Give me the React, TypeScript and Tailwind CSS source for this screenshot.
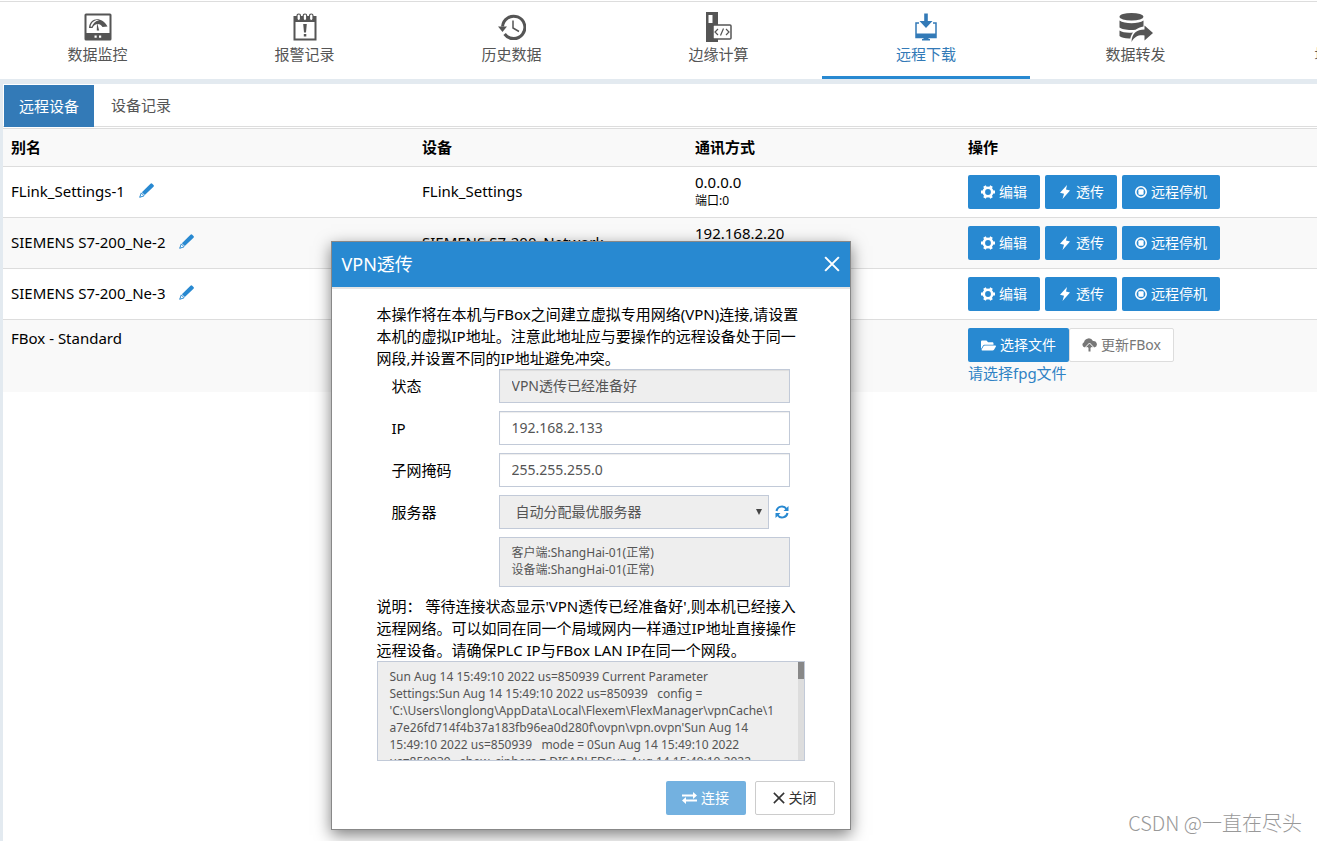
import type { ReactNode } from "react";
import { FaFolderOpen } from "react-icons/fa";

const BTN = "inline-flex h-[34px] items-center gap-1 rounded-xs text-sm";

interface NavItem {
  label: string;
  icon: ReactNode;
  active?: boolean;
  wide?: boolean;
}

function MonitorIcon() {
  return (
    <svg viewBox="0 0 28 28" className="h-7 w-7" fill="currentColor">
      <path fillRule="evenodd" d="M2 .5h24A1.500 1.500 0 0 1 27.500 2v24a1.500 1.500 0 0 1-1.500 1.500H2A1.500 1.500 0 0 1 .5 26V2A1.500 1.500 0 0 1 2 .5ZM2.500 2.500v17.500h23V2.500ZM10.500 22.500v2.200h2.200v-2.200Zm4.500 0v2.200h2.200v-2.200Z" />
      <path d="M5 15C5.500 4 18 3 23.500 13.500l-5 .5C16 9.500 10.500 10 8.500 15Z" />
      <path d="M6.500 13.500C7.500 8.500 12 6.300 15 7.300 11.500 8 9 10.500 7.800 13.800Z" fill="#fff" />
      <path d="m13 9.500 2.200 8h-2.400Z" />
    </svg>
  );
}

function AlarmIcon() {
  return (
    <svg viewBox="0 0 24 28" className="h-7 w-6" fill="currentColor">
      <path fillRule="evenodd" d="M.5 3h23v24.500H.5ZM2.500 9v16.500h19V9Z" />
      <g fill="#fff" stroke="currentColor" strokeWidth="1.200">
        <rect x="4" y="1" width="3.500" height="6.500" rx="1.700" />
        <rect x="10.200" y="1" width="3.500" height="6.500" rx="1.700" />
        <rect x="16.500" y="1" width="3.500" height="6.500" rx="1.700" />
      </g>
      <path d="M10.200 11h3.600l-.8 8.500h-2ZM10.800 21h2.500v2.500h-2.500Z" />
    </svg>
  );
}

function HistoryIcon() {
  return (
    <svg viewBox="0 0 28 28" className="h-7 w-7" fill="none" stroke="currentColor">
      <path d="M4.500 13.500A11.200 11.200 0 1 1 6.600 21" strokeWidth="3" />
      <path d="M0 13.500h9L4.500 19Z" fill="currentColor" stroke="none" />
      <path d="M15 7.500V15l6 3.500" strokeWidth="1.500" />
    </svg>
  );
}

function EdgeIcon() {
  return (
    <svg viewBox="0 0 26 30" className="h-[30px] w-[26px]" fill="currentColor">
      <path fillRule="evenodd" d="M0 0h12v30H0ZM2.500 3v8h4V3Z" />
      <rect x="7" y="13" width="18" height="14" rx="1" fill="#fff" stroke="currentColor" strokeWidth="1.500" />
      <path d="m12 17-3 3 3 3m8-6 3 3-3 3m-2.500-6.500-3 7" fill="none" stroke="currentColor" strokeWidth="1.200" />
    </svg>
  );
}

function DownloadIcon() {
  return (
    <svg viewBox="0 0 22 28" className="h-7 w-[22px]" fill="currentColor">
      <path d="M4 10H1v14.500h20V10h-3" fill="none" stroke="currentColor" strokeWidth="1.500" />
      <path d="M1 20.500h20v4H1ZM8.500 24h5v2H15v1.500H7V26h1.500ZM9.200.5h3.600V8H17.500L11 15 4.500 8h4.700Z" />
    </svg>
  );
}

function ForwardIcon() {
  return (
    <svg viewBox="0 0 34 29" className="h-[29px] w-[34px]" fill="currentColor">
      <ellipse cx="12.500" cy="3.800" rx="12" ry="3.800" />
      <path d="M.5 7.500c5 3.500 19 3.500 24 0v6c-3 .5-6 2-8 3.200C10 17.500 3 16.500.5 14.500Z" />
      <path d="M.5 17.500c3 2 8 2.500 13.500 2-1.500 2-2.200 4-2.700 6-4.800.2-9.300-.8-10.800-2.500Z" />
      <path d="M25.500 12.500 34 20l-8.500 7.500v-5c-5.500-.8-9.500.5-13 6.500.3-8.500 5-12.500 13-12.500Z" />
    </svg>
  );
}

function PencilIcon() {
  return (
    <svg viewBox="0 0 15 15" className="h-[15px] w-[15px]" fill="currentColor">
      <path d="M11.500.7a1.200 1.200 0 0 1 1.700 0l1.300 1.300a1.200 1.200 0 0 1 0 1.700l-8.700 8.400L2.900 9.200Z" />
      <path d="M2.300 9.900.7 14.300l4.400-1.500Z" fill="#fff" stroke="currentColor" />
    </svg>
  );
}

function CogIcon() {
  return (
    <svg viewBox="0 0 14 14" className="h-3.5 w-3.5" fill="none" stroke="currentColor">
      <circle cx="7" cy="7" r="4.200" strokeWidth="2.600" />
      <path d="M0 7h2M12 7h2M3.500 1l1 1.700M10.500 1l-1 1.700M3.500 13l1-1.700M10.500 13l-1-1.700" strokeWidth="3" />
    </svg>
  );
}

function BoltIcon() {
  return (
    <svg viewBox="0 0 14 14" className="h-3.5 w-3.5" fill="currentColor">
      <path d="M9 0 2 7.800l4 1L4.500 14 12 5.500l-4-1Z" />
    </svg>
  );
}

function StopIcon() {
  return (
    <svg viewBox="0 0 12 12" className="h-3 w-3">
      <circle cx="6" cy="6" r="5.200" fill="none" stroke="currentColor" strokeWidth="1.600" />
      <rect x="3.400" y="3.200" width="5.200" height="5.600" rx="1" fill="currentColor" />
    </svg>
  );
}

function CloudUpIcon() {
  return (
    <svg viewBox="0 0 15 14" className="h-3.5 w-[15px]" fill="currentColor">
      <path d="M3 9.500A2.800 2.800 0 0 1 2 4.200 4.800 4.800 0 0 1 11 3a3.300 3.300 0 0 1 1.200 6.500Z" />
      <path d="m7.500 5 4.500 4.700H9V14H6V9.700H3Z" stroke="#fff" />
    </svg>
  );
}

function RefreshIcon() {
  return (
    <svg viewBox="0 0 14 14" className="h-3.5 w-3.5" fill="none" stroke="currentColor" strokeWidth="2">
      <path d="M1.500 6A5.500 5.500 0 0 1 11.500 4M12.500 8a5.500 5.500 0 0 1-10 2" />
      <path d="M13.500 1v5h-5ZM.5 13V8h5Z" fill="currentColor" stroke="none" />
    </svg>
  );
}

function SwapIcon() {
  return (
    <svg viewBox="0 0 15 12" className="h-3 w-[15px]" fill="currentColor">
      <path d="M0 2.500h11V0l4 3.500L11 7V4.500H0ZM15 7.500H4V5L0 8.500 4 12V9.500h11Z" />
    </svg>
  );
}

function CrossIcon({ className }: { className: string }) {
  return (
    <svg viewBox="0 0 14 14" className={className} fill="none" stroke="currentColor" strokeWidth="1.800">
      <path d="m1 1 12 12M13 1 1 13" />
    </svg>
  );
}

const NAV: NavItem[] = [
  { label: "数据监控", icon: <MonitorIcon /> },
  { label: "报警记录", icon: <AlarmIcon /> },
  { label: "历史数据", icon: <HistoryIcon /> },
  { label: "边缘计算", icon: <EdgeIcon /> },
  { label: "远程下载", icon: <DownloadIcon />, active: true },
  { label: "数据转发", icon: <ForwardIcon />, wide: true },
  { label: "地图信息", icon: null },
];

const DEVICES = [
  { alias: "FLink_Settings-1", device: "FLink_Settings", ip: "0.0.0.0", port: "端口:0" },
  { alias: "SIEMENS S7-200_Ne-2", device: "SIEMENS S7-200_Network", ip: "192.168.2.20", port: "" },
  { alias: "SIEMENS S7-200_Ne-3", device: "", ip: "", port: "" },
];

const LOG = [
  "Sun Aug 14 15:49:10 2022 us=850939 Current Parameter",
  "Settings:Sun Aug 14 15:49:10 2022 us=850939   config =",
  "'C:\\Users\\longlong\\AppData\\Local\\Flexem\\FlexManager\\vpnCache\\1",
  "a7e26fd714f4b37a183fb96ea0d280f\\ovpn\\vpn.ovpn'Sun Aug 14",
  "15:49:10 2022 us=850939   mode = 0Sun Aug 14 15:49:10 2022",
  "us=850939   show_ciphers = DISABLEDSun Aug 14 15:49:10 2022",
].join("\n");

function navClass(item: NavItem) {
  if (item.active) return "flex w-[208px] shrink-0 flex-col items-center border-b-3 border-[#2889d1] pt-[9px] text-[#337ab7]";
  if (item.wide) return "flex w-[211px] shrink-0 flex-col items-center pt-[9px] text-[#555]";
  return "flex w-[207px] shrink-0 flex-col items-center pt-[9px] text-[#555]";
}

function TopNav() {
  return (
    <nav className="-ml-1.5 mt-px flex h-[78px] overflow-hidden border-t border-[#ddd]">
      {NAV.map((item) => (
        <a key={item.label} href="#" className={navClass(item)}>
          <span className="flex h-8 items-center">{item.icon}</span>
          <span className="whitespace-nowrap text-[15px] leading-[22px]">{item.label}</span>
        </a>
      ))}
    </nav>
  );
}

function DeviceTable() {
  return (
    <table className="mt-px w-full table-fixed border-collapse text-left text-[15px] leading-[22px]">
      <colgroup>
        <col className="w-[411px]" />
        <col className="w-[273px]" />
        <col className="w-[273px]" />
        <col />
      </colgroup>
      <thead>
        <tr className="h-[38px] border-t border-[#ddd] bg-[#f9f9f9]">
          <th className="px-2 pb-0.5">别名</th>
          <th className="px-2 pb-0.5">设备</th>
          <th className="px-2 pb-0.5">通讯方式</th>
          <th className="px-2 pb-0.5">操作</th>
        </tr>
      </thead>
      <tbody>
        {DEVICES.map((d) => (
          <tr key={d.alias} className="h-[51px] border-t border-[#ddd] even:bg-[#f9f9f9]">
            <td className="px-2 pb-0.5">
              <span className="flex items-center gap-3.5">
                {d.alias}
                <button aria-label="编辑别名" className="pb-0.5 text-[#2889d1]">
                  <PencilIcon />
                </button>
              </span>
            </td>
            <td className="px-2 pb-0.5">{d.device}</td>
            <td className="px-2">
              <div className="leading-[18px]">{d.ip}</div>
              <div className="h-5 text-xs leading-5">{d.port}</div>
            </td>
            <td className="px-2">
              <div className="flex gap-[5px] text-white">
                <button className={`${BTN} bg-[#2889d1] px-[13px]`}>
                  <CogIcon />
                  编辑
                </button>
                <button className={`${BTN} bg-[#2889d1] px-[13px]`}>
                  <BoltIcon />
                  透传
                </button>
                <button className={`${BTN} bg-[#2889d1] px-[13px]`}>
                  <StopIcon />
                  远程停机
                </button>
              </div>
            </td>
          </tr>
        ))}
        <tr className="border-t border-[#ddd] bg-[#f9f9f9] align-top">
          <td className="px-2 py-[7px]">FBox - Standard</td>
          <td />
          <td />
          <td className="px-2 py-2">
            <div className="flex">
              <button className={`${BTN} bg-[#2889d1] px-[13px] text-white`}>
                <FaFolderOpen className="h-[15px] w-[15px]" />
                选择文件
              </button>
              <button className={`${BTN} border border-[#ddd] bg-white px-3 text-[#777]`}>
                <CloudUpIcon />
                更新FBox
              </button>
            </div>
            <div className="text-[#2f82c4]">请选择fpg文件</div>
          </td>
        </tr>
      </tbody>
    </table>
  );
}

function VpnDialog() {
  const field = "h-[34px] w-[291px] border border-[#c2cad8] px-3 pb-0.5 text-sm text-[#555] shadow-[inset_0_1px_1px_rgba(0,0,0,0.075)]";
  return (
    <section
      role="dialog"
      aria-labelledby="vpn-title"
      className="absolute left-1/2 top-[241px] ml-[-328px] w-[520px] border border-[#888] bg-white pb-[14px] text-[15px] leading-[22px] shadow-[0_5px_15px_rgba(0,0,0,0.5)]"
    >
      <header className="flex h-[47px] items-center justify-between border-b-2 border-[#e5e5e5] bg-[#2889d1] px-[10px] pb-0.5 text-white">
        <h2 id="vpn-title" className="text-lg">VPN透传</h2>
        <button aria-label="关闭窗口">
          <CrossIcon className="h-4 w-4" />
        </button>
      </header>
      <div className="px-[45px] pt-[14px]">
        <p>
          本操作将在本机与FBox之间建立虚拟专用网络(VPN)连接,请设置
          <br />
          本机的虚拟IP地址。注意此地址应与要操作的远程设备处于同一
          <br />
          网段,并设置不同的IP地址避免冲突。
        </p>
        <div className="grid grid-cols-[107px_1fr] items-center gap-y-2 pl-[15px]">
          <label htmlFor="status">状态</label>
          <input id="status" readOnly defaultValue="VPN透传已经准备好" className={`${field} bg-[#eee]`} />
          <label htmlFor="ip">IP</label>
          <input id="ip" defaultValue="192.168.2.133" className={`${field} bg-white`} />
          <label htmlFor="mask">子网掩码</label>
          <input id="mask" defaultValue="255.255.255.0" className={`${field} bg-white`} />
          <label htmlFor="server">服务器</label>
          <div className="flex items-center gap-[6px]">
            <div className="relative">
              <select id="server" className="block h-[34px] w-[270px] appearance-none border border-[#c2cad8] bg-[#eee] px-4 text-sm text-[#555]">
                <option>自动分配最优服务器</option>
              </select>
              <svg viewBox="0 0 6 6" className="pointer-events-none absolute right-[7px] top-[14px] h-1.5 w-1.5" fill="#444">
                <path d="M0 0h6L3 6Z" />
              </svg>
            </div>
            <button aria-label="刷新" className="text-[#2889d1]">
              <RefreshIcon />
            </button>
          </div>
          <div className="col-start-2 h-[50px] w-[291px] border border-[#c2cad8] bg-[#eee] px-3 py-[6px] text-xs leading-[17px] text-[#555]">
            客户端:ShangHai-01(正常)
            <br />
            设备端:ShangHai-01(正常)
          </div>
        </div>
        <p className="pt-2">
          说明： 等待连接状态显示'VPN透传已经准备好',则本机已经接入
          <br />
          远程网络。可以如同在同一个局域网内一样通过IP地址直接操作
          <br />
          远程设备。请确保PLC IP与FBox LAN IP在同一个网段。
        </p>
        <div className="flex h-[100px] border border-[#c2cad8] bg-[#eee]">
          <textarea
            aria-label="连接日志"
            readOnly
            defaultValue={LOG}
            className="h-full min-w-0 flex-1 resize-none overflow-hidden py-[6px] pl-3 text-xs leading-[17px] text-[#555]"
          />
          <div className="w-[6px] bg-[#ddd]">
            <div className="h-[17px] bg-[#888]" />
          </div>
        </div>
      </div>
      <footer className="flex justify-end gap-[9px] px-[15px] pt-5">
        <button disabled className={`${BTN} w-20 justify-center bg-[#73b1e0] text-white`}>
          <SwapIcon />
          连接
        </button>
        <button className={`${BTN} w-20 justify-center border border-[#ccc] bg-white text-[#333]`}>
          <CrossIcon className="h-3 w-3" />
          关闭
        </button>
      </footer>
    </section>
  );
}

export default function App() {
  return (
    <div className="relative flow-root min-h-screen overflow-hidden bg-white font-['Noto_Sans','Noto_Sans_CJK_SC',sans-serif] text-black">
      <TopNav />
      <main className="min-h-[762px] border-l-3 border-t-5 border-[#e3eaf0]">
        <div role="tablist" className="flex h-[43px] border-b border-[#ddd] pt-px text-[15px]">
          <button role="tab" aria-selected="true" className="ml-px h-[42px] w-[90px] bg-[#337ab7] text-white">
            远程设备
          </button>
          <button role="tab" aria-selected="false" className="px-[17px] text-[#555]">
            设备记录
          </button>
        </div>
        <DeviceTable />
      </main>
      <VpnDialog />
      <div className="absolute bottom-1 right-[15px] font-['Noto_Sans_CJK_SC',sans-serif] text-xl font-light text-[#999]">
        CSDN @一直在尽头
      </div>
    </div>
  );
}
